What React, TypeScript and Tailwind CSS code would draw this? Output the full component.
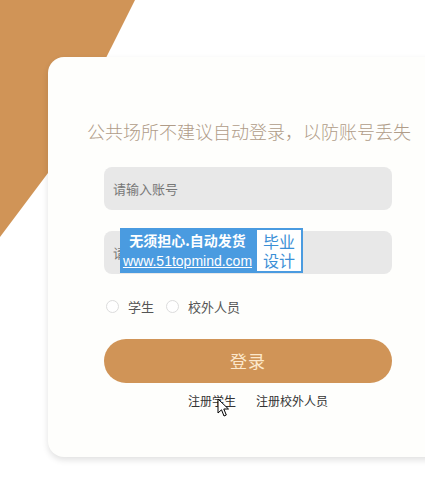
import React from "react";

function Radio({ label }: { label: string }) {
  return (
    <label className="flex items-center gap-[9px]">
      <span className="w-[13px] h-[13px] rounded-full border border-[#dcdcdc] bg-white" />
      <span className="text-[13px] text-[#555]">{label}</span>
    </label>
  );
}

function Watermark() {
  return (
    <div className="absolute left-[16px] -top-[3px] flex h-[45px]">
      <div className="w-[135px] bg-[#4a9be0] flex flex-col items-center justify-center text-white leading-none">
        <span className="text-[14px] font-bold">无须担心.自动发货</span>
        <span className="text-[14px] underline mt-[7px] font-['Liberation_Sans',sans-serif]">www.51topmind.com</span>
      </div>
      <div className="w-[48px] bg-white border-2 border-[#4a9be0] flex flex-col items-center justify-center text-[16px] leading-[19px] text-[#3b8fd6]">
        <span>毕业</span>
        <span>设计</span>
      </div>
    </div>
  );
}

function Cursor() {
  return (
    <svg className="absolute left-[113px] top-[5px]" width="13" height="20" viewBox="0 0 13 20">
      <path d="M1 1 L1 15 L4.5 11.8 L7 18 L9.3 17 L6.8 11 L11.5 11 Z" fill="#fff" stroke="#000" strokeWidth="1" strokeLinejoin="round" />
    </svg>
  );
}

export default function App() {
  return (
    <div className="relative w-[425px] h-[504px] overflow-hidden bg-white font-['Noto_Sans_CJK_SC',sans-serif]">
      <div className="absolute left-0 top-0 w-[140px] h-[240px] bg-[#d09457] [clip-path:polygon(0_0,135px_0,115px_40px,48px_173px,0_237px)]" />
      <div className="relative ml-[48px] mt-[57px] w-[400px] h-[400px] rounded-[16px] bg-[#fefefc] shadow-[0_3px_6px_rgba(0,0,0,0.12)]">
        <p className="pt-[62px] pl-[39px] text-[18px] leading-[24px] font-light text-[#b09c88] whitespace-nowrap">
          公共场所不建议自动登录，以防账号丢失
        </p>
        <div className="ml-[56px] w-[288px] mt-[24px] flex flex-col">
          <div className="h-[43px] rounded-[8px] bg-[#e8e8e8] flex items-center pl-[9px] text-[13px] text-[#777]">
            请输入账号
          </div>
          <div className="relative mt-[21px] h-[43px] rounded-[8px] bg-[#e8e8e8] flex items-center pl-[9px] text-[13px] text-[#777]">
            请输入密码
            <Watermark />
          </div>
          <div className="mt-[23px] flex items-center gap-[12px] pl-[2px]">
            <Radio label="学生" />
            <Radio label="校外人员" />
          </div>
          <button className="mt-[22px] h-[44px] rounded-full bg-[#d09457] text-[17px] text-[#fce8cc] tracking-[1px]">
            登录
          </button>
          <div className="relative mt-[10px] pl-[84px] flex gap-[20px] text-[12px] leading-[16px] text-[#333]">
            <span>注册学生</span>
            <span>注册校外人员</span>
            <Cursor />
          </div>
        </div>
      </div>
    </div>
  );
}
